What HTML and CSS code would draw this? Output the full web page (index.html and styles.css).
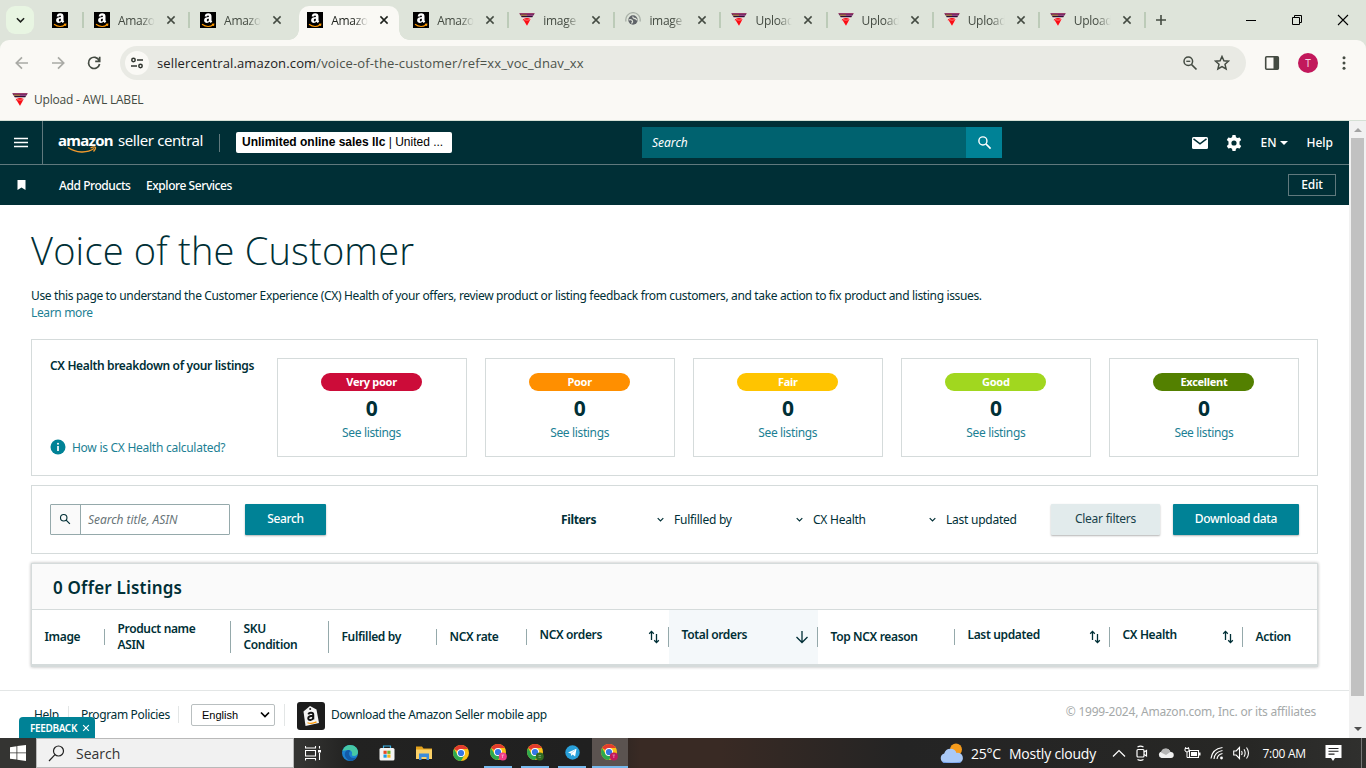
FILE: index.html
```html
<!DOCTYPE html>
<html lang="en">
  <head>
    <meta charset="UTF-8" />
    <meta name="viewport" content="width=device-width, initial-scale=1.0" />
    <title>Voice of the Customer</title>
    <link rel="stylesheet" href="styles.css">
  </head>
  <body>
    <svg class="sprite" width="0" height="0">
      <symbol id="amazon" viewBox="0 0 16 16">
        <rect width="16" height="16" fill="#000" />
        <path d="M4.700 4.400C4.900 2.300 6.300 1.300 8.200 1.300c2.200 0 3.300 1.100 3.300 3v3.600c0 .7.3 1.100.8 1.700l-1.600 1.400-1.200-1.200C8 11.600 4.100 11.300 4.100 8.300c0-2.300 2-3.100 4.800-3.200V4.600c0-.8-.3-1.200-.9-1.200-.6 0-.9.4-1 1.200z" fill="#fff" />
        <path d="M8.900 6.700c-1.500 0-2.100.4-2.100 1.500 0 .8.400 1.200.9 1.200.9 0 1.200-.8 1.200-2.700z" fill="#000" />
        <path d="M2 12.300c3.500 2.600 8 2.700 11.300.5M11.800 12.300l2-.2-.3 1.800" fill="none" stroke="#f90" stroke-width="1.100" />
      </symbol>
      <symbol id="awl" viewBox="0 0 16 16">
        <path d="M.5 1.300h15L8 14.500z" fill="#f7dcdc" />
        <path d="M.5 1.300h15l-2.200 4h-10.600z" fill="#2a1033" />
        <path d="M.5 1.800h15" stroke="#b5386f" stroke-width="1" />
        <path d="M2 3.200h6" stroke="#e0a955" stroke-width="1" />
        <path d="M8 3.200h6" stroke="#c95ab0" stroke-width="1" />
        <path d="M3.500 8.300L4.500 7q3.500-2 7 0l-.5 1.300L8 13.800 4.600 8.300z" fill="#f90d14" />
        <path d="M5 7.600q3 1.200 6 0" stroke="#ff8f8f" fill="none" stroke-width=".8" />
      </symbol>
      <symbol id="globe" viewBox="0 0 16 16">
        <path d="M1 9.500A7.200 7.200 0 1 1 15 9.500" fill="none" stroke="#a9b1a8" stroke-width="1.300" />
        <circle cx="8" cy="8" r="4.700" fill="#5f6368" />
        <path d="M4 8c1.500-1 3 0 3.500 1s-.5 2-1 2.500M8 4.500c-.5 1.500 1 2 2 2s1 1.500 2.300 1.500" fill="none" stroke="#dfe4da" stroke-width="1.300" />
      </symbol>
      <symbol id="close" viewBox="0 0 10 10">
        <path d="M1.400 1.400l7.200 7.200M8.600 1.400L1.400 8.600" fill="none" stroke="currentColor" stroke-width="1.500" />
      </symbol>
      <symbol id="chevron" viewBox="0 0 10 6">
        <path d="M1 1l4 4 4-4" fill="none" stroke="currentColor" stroke-width="1.700" />
      </symbol>
      <symbol id="lens" viewBox="0 0 16 16">
        <circle cx="6.300" cy="6.300" r="4.300" fill="none" stroke="currentColor" stroke-width="1.500" />
        <path d="M9.500 9.500l5 5" stroke="currentColor" stroke-width="1.700" />
      </symbol>
      <symbol id="sort" viewBox="0 0 12 16">
        <path d="M3.500 11V2.500M1.200 4.700l2.300-2.300L5.800 4.700M8.500 5v8.500M6.200 11.300l2.300 2.300 2.300-2.300" fill="none" stroke="currentColor" stroke-width="1.300" />
      </symbol>
      <symbol id="chrome" viewBox="0 0 16 16">
        <circle cx="8" cy="8" r="8" fill="#fbc116" />
        <path d="M8 8L1.100 4A8 8 0 0 1 14.900 4H8z" fill="#e33b2e" />
        <path d="M1.100 4A8 8 0 0 0 8 16l3.500-6L8 8 4.500 10z" fill="#2da94f" />
        <circle cx="8" cy="8" r="4" fill="#fff" />
        <circle cx="8" cy="8" r="3.100" fill="#3577e5" />
      </symbol>
    </svg>

    <header class="browser">
      <div class="tabstrip">
        <div class="tab-search"><svg width="9" height="6"><use href="#chevron" /></svg></div>
        <div class="tab pinned"><svg class="favicon"><use href="#amazon" /></svg></div>
        <div class="tab"><svg class="favicon"><use href="#amazon" /></svg><span>Amazon</span><svg class="x"><use href="#close" /></svg></div>
        <div class="tab no-sep"><svg class="favicon"><use href="#amazon" /></svg><span>Amazon</span><svg class="x"><use href="#close" /></svg></div>
        <div class="tab active"><svg class="favicon"><use href="#amazon" /></svg><span>Amazon</span><svg class="x"><use href="#close" /></svg></div>
        <div class="tab"><svg class="favicon"><use href="#amazon" /></svg><span>Amazon</span><svg class="x"><use href="#close" /></svg></div>
        <div class="tab"><svg class="favicon"><use href="#awl" /></svg><span>image</span><svg class="x"><use href="#close" /></svg></div>
        <div class="tab"><svg class="favicon"><use href="#globe" /></svg><span>image</span><svg class="x"><use href="#close" /></svg></div>
        <div class="tab"><svg class="favicon"><use href="#awl" /></svg><span>Upload</span><svg class="x"><use href="#close" /></svg></div>
        <div class="tab"><svg class="favicon"><use href="#awl" /></svg><span>Upload</span><svg class="x"><use href="#close" /></svg></div>
        <div class="tab"><svg class="favicon"><use href="#awl" /></svg><span>Upload</span><svg class="x"><use href="#close" /></svg></div>
        <div class="tab"><svg class="favicon"><use href="#awl" /></svg><span>Upload</span><svg class="x"><use href="#close" /></svg></div>
        <svg class="new-tab" width="12" height="12" viewBox="0 0 12 12"><path d="M6 1v10M1 6h10" stroke="#444b42" stroke-width="1.600" /></svg>
        <div class="window-controls">
          <svg width="12" height="12" viewBox="0 0 12 12"><path d="M1 6.500h10" stroke="#000" /></svg>
          <svg width="12" height="12" viewBox="0 0 12 12"><path d="M1.500 3.500h7v7h-7zM3.500 3.500v-2h7v7h-2" fill="none" stroke="#000" /></svg>
          <svg width="12" height="12" viewBox="0 0 12 12"><path d="M1 1l10 10M11 1L1 11" stroke="#000" stroke-width="1.100" /></svg>
        </div>
      </div>

      <div class="toolbar">
        <svg class="tool muted" viewBox="0 0 24 24"><path d="M18 12H6.500M12 6.300L6.300 12l5.700 5.700" /></svg>
        <svg class="tool muted" viewBox="0 0 24 24"><path d="M6 12h11.500M12 6.300l5.700 5.700-5.700 5.700" /></svg>
        <svg class="tool" viewBox="0 0 24 24"><path d="M17.200 9.500A5.600 5.600 0 1 0 17.600 13M17.700 5.800v4.500h-4.500" /></svg>
        <div class="omnibox">
          <span class="site-info">
            <svg width="14" height="14" viewBox="0 0 14 14"><g fill="none" stroke="#30352f" stroke-width="1.500"><circle cx="3.500" cy="4" r="1.700" /><path d="M7 4h6M1 10h6" /><circle cx="10.500" cy="10" r="1.700" /></g></svg>
          </span>
          <span class="url">sellercentral.amazon.com<i>/voice-of-the-customer/ref=xx_voc_dnav_xx</i></span>
          <svg width="16" height="16" viewBox="0 0 16 16" class="omni-icon"><use href="#lens" /><path d="M4.300 6.300h4" stroke="currentColor" stroke-width="1.300" /></svg>
          <svg width="16" height="16" viewBox="0 0 16 16" class="omni-icon"><path d="M8 1.500l1.900 4.300 4.600.4-3.500 3.100 1.100 4.600L8 11.500l-4.100 2.400L5 9.300 1.500 6.200l4.600-.4z" fill="none" stroke="currentColor" stroke-width="1.500" /></svg>
        </div>
        <svg class="side-panel" width="24" height="24" viewBox="0 0 24 24"><rect x="5.700" y="5.700" width="12.600" height="12.600" rx="1" fill="none" stroke="#444b42" stroke-width="1.600" /><path d="M13.500 5.700h4.800v12.600h-4.800z" fill="#444b42" /></svg>
        <span class="profile">T</span>
        <svg class="kebab" width="24" height="24" viewBox="0 0 24 24" fill="#444b42"><circle cx="12" cy="6.700" r="1.500" /><circle cx="12" cy="12" r="1.500" /><circle cx="12" cy="17.300" r="1.500" /></svg>
      </div>

      <div class="bookmarks">
        <svg class="favicon"><use href="#awl" /></svg>
        <span>Upload - AWL LABEL</span>
      </div>
    </header>

    <div class="viewport">
      <div class="page">
        <nav class="topnav">
          <div class="menu"><svg width="14" height="11" viewBox="0 0 14 11"><path d="M0 1.500h14M0 5.500h14M0 9.500h14" stroke="#fff" stroke-width="1.600" /></svg></div>
          <div class="logo">
            <b>amazon</b><span>seller central</span>
            <svg class="smile" width="31" height="8" viewBox="0 0 31 8"><path d="M1 1.500c8 5.500 19 6 26 1M23.500 1.800c2.500-1 4.500-1 4.800-.4s-.4 2.600-1.800 4" fill="none" stroke="#f19a2e" stroke-width="1.400" /></svg>
          </div>
          <div class="account"><b>Unlimited online sales llc</b> | United ...</div>
          <div class="nav-search">
            <span>Search</span>
            <div class="nav-search-btn"><svg width="15" height="15"><use href="#lens" /></svg></div>
          </div>
          <div class="nav-links">
            <svg width="16" height="12" viewBox="0 0 16 12"><rect width="16" height="12" rx="1.500" fill="#fff" /><path d="M1.500 1.800L8 6.800l6.500-5" fill="none" stroke="#002f36" stroke-width="1.500" /></svg>
            <svg width="16" height="16" viewBox="0 0 16 16"><path d="M6.500 0h3l.5 2.300 1.400.8 2.300-.7 1.500 2.600L13.500 6.600v2.800l1.700 1.600-1.500 2.600-2.300-.7-1.400.8-.5 2.300h-3L6 13.700l-1.400-.8-2.300.7L.8 11l1.700-1.600V6.600L.8 5l1.500-2.600 2.300.7L6 2.300zM8 5.400a2.600 2.600 0 1 0 0 5.200 2.600 2.600 0 0 0 0-5.200z" fill="#fff" fill-rule="evenodd" /></svg>
            <span class="lang">EN<svg width="8" height="4" viewBox="0 0 8 4"><path d="M0 0h8L4 4z" fill="#fff" /></svg></span>
            <span class="help">Help</span>
          </div>
        </nav>
        <nav class="subnav">
          <svg width="9" height="10" viewBox="0 0 9 10"><path d="M.5 0h8v10L4.500 7.500.5 10z" fill="#fff" /></svg>
          <span class="sub-products">Add Products</span>
          <span class="sub-services">Explore Services</span>
          <span class="edit"><span>Edit</span></span>
        </nav>

        <main>
          <h1><span>Voice of the Customer</span></h1>
          <p class="intro"><span>Use this page to understand the Customer Experience (CX) Health of your offers, review product or listing feedback from customers, and take action to fix product and listing issues.</span><br><a>Learn more</a></p>

          <section class="box health">
            <div class="health-info">
              <b>CX Health breakdown of your listings</b>
              <a><svg width="16" height="16" viewBox="0 0 16 16"><circle cx="8" cy="8" r="7.500" fill="#008296" /><path d="M8 7v5" stroke="#fff" stroke-width="1.700" /><circle cx="8" cy="4.700" r="1" fill="#fff" /></svg><span>How is CX Health calculated?</span></a>
            </div>
            <div class="cards">
              <div class="card"><span class="pill very-poor">Very poor</span><strong>0</strong><a>See listings</a></div>
              <div class="card"><span class="pill poor">Poor</span><strong>0</strong><a>See listings</a></div>
              <div class="card"><span class="pill fair">Fair</span><strong>0</strong><a>See listings</a></div>
              <div class="card"><span class="pill good">Good</span><strong>0</strong><a>See listings</a></div>
              <div class="card"><span class="pill excellent">Excellent</span><strong>0</strong><a>See listings</a></div>
            </div>
          </section>

          <section class="box filters">
            <div class="search-field">
              <div class="search-icon"><svg width="12" height="12"><use href="#lens" /></svg></div>
              <span>Search title, ASIN</span>
            </div>
            <div class="btn search-btn">Search</div>
            <b class="filters-label">Filters</b>
            <div class="filter fulfilled"><svg width="7" height="5"><use href="#chevron" /></svg><span>Fulfilled by</span></div>
            <div class="filter cx"><svg width="7" height="5"><use href="#chevron" /></svg><span>CX Health</span></div>
            <div class="filter updated"><svg width="7" height="5"><use href="#chevron" /></svg><span>Last updated</span></div>
            <div class="btn clear-btn">Clear filters</div>
            <div class="btn download-btn">Download data</div>
          </section>

          <section class="listings">
            <h2><span>0 Offer Listings</span></h2>
            <div class="thead">
              <div class="th"><span>Image</span></div>
              <div class="th double"><span>Product name<br>ASIN</span></div>
              <div class="th double"><span>SKU<br>Condition</span></div>
              <div class="th"><span>Fulfilled by</span></div>
              <div class="th"><span>NCX rate</span></div>
              <div class="th sortable"><span>NCX orders</span><svg width="12" height="16"><use href="#sort" /></svg></div>
              <div class="th sortable sorted"><span>Total orders</span><svg width="14" height="14" viewBox="0 0 14 14"><path d="M7 1v11M1.500 7L7 12.500 12.500 7" fill="none" stroke="currentColor" stroke-width="1.300" /></svg></div>
              <div class="th"><span>Top NCX reason</span></div>
              <div class="th sortable"><span>Last updated</span><svg width="12" height="16"><use href="#sort" /></svg></div>
              <div class="th sortable"><span>CX Health</span><svg width="12" height="16"><use href="#sort" /></svg></div>
              <div class="th"><span>Action</span></div>
            </div>
          </section>
        </main>

        <footer>
          <span class="foot-help">Help</span>
          <span class="foot-policies">Program Policies</span>
          <div class="foot-select">
            <div class="select">English<svg width="10" height="7"><use href="#chevron" /></svg></div>
          </div>
          <svg class="app-icon" width="28" height="28" viewBox="0 0 28 28">
            <rect width="28" height="28" rx="3" fill="#1c1c1c" />
            <path d="M6.500 9.500L13 4l6.500 3.500L22 21 8.500 24z" fill="#f4f4f4" />
            <circle cx="13.200" cy="7" r="1" fill="#222" />
            <path d="M11.300 12.400c.8-2.200 5-2.300 5 .5v4.600M16.200 13.700c-3 0-5 .7-5 2.600 0 2.500 4.400 2.200 5-.7" fill="none" stroke="#111" stroke-width="1.900" />
            <path d="M10.500 20.700c3 1 6 .7 9-.8" fill="none" stroke="#f90" stroke-width="1.200" />
          </svg>
          <span class="foot-app">Download the Amazon Seller mobile app</span>
          <span class="copyright">© 1999-2024, Amazon.com, Inc. or its affiliates</span>
        </footer>
        <div class="feedback"><span>FEEDBACK</span><svg width="8" height="8"><use href="#close" /></svg></div>
      </div>
      <div class="scrollbar">
        <svg width="8" height="4" viewBox="0 0 8 4"><path d="M0 4h8L4 0z" fill="#a3a3a3" /></svg>
        <div class="thumb"></div>
        <svg width="8" height="4" viewBox="0 0 8 4"><path d="M0 0h8L4 4z" fill="#505050" /></svg>
      </div>
    </div>

    <div class="taskbar">
      <div class="start"><svg width="16" height="16" viewBox="0 0 16 16"><path d="M0 2.200l6.500-1v6.300H0zM7.300 1.100L16 0v7.500H7.300zM0 8.300h6.500v6.300L0 13.700zM7.300 8.300H16V16l-8.700-1.200z" fill="#fff" /></svg></div>
      <div class="task-search"><svg width="17" height="17" viewBox="0 0 17 17"><circle cx="10.500" cy="6" r="5" fill="none" stroke="#222" stroke-width="1.200" /><path d="M7 9.700L1 16" stroke="#222" stroke-width="1.200" /></svg><span>Search</span></div>
      <div class="app"><svg width="16" height="16" viewBox="0 0 16 16" fill="none" stroke="#fff" stroke-width="1.100"><path d="M.5 1v2h10V1M.5 15.500v-2h10v2M.5 5.500h10v5.500H.5zM14.500 1v2.500M14.500 8v7" /><path d="M13 5h3v2.500h-3z" fill="#fff" stroke="none" /></svg></div>
      <div class="app"><svg width="16" height="16" viewBox="0 0 16 16"><circle cx="8" cy="8" r="8" fill="#1b82d1" /><path d="M.5 6C2 1.500 5.500 0 8 0c5 0 8 3.500 8 7 0 2.500-2 4-4 4s-2.500-1-2-2 0-4-4-4c-3 0-5 1-5.500 1z" fill="#46c8a5" /><path d="M6 5C3 6 2 9 3.500 12c1.500 3 4.500 4 6 3.900 2-.4 4-1.700 5-3.400-3 1-6 .5-7-2s-.5-3.500 1-4.500C8 5.300 7 5 6 5z" fill="#135ba8" /></svg></div>
      <div class="app"><svg width="16" height="16" viewBox="0 0 16 16"><path d="M4.500 4V1h7v3" fill="none" stroke="#3bb3ea" stroke-width="1.200" /><rect x=".5" y="3" width="15" height="12.500" rx="1.500" fill="#f4f4f4" /><path d="M4.500 5.700h3.200v3.200H4.500z" fill="#e74a25" /><path d="M8.300 5.700h3.200v3.200H8.300z" fill="#72b52b" /><path d="M4.500 9.500h3.200v3.200H4.500z" fill="#1d9de2" /><path d="M8.300 9.500h3.200v3.200H8.300z" fill="#f5b51d" /></svg></div>
      <div class="app"><svg width="16" height="16" viewBox="0 0 16 16"><path d="M0 1.500h6l1.500 2H16V14H0z" fill="#e4a21b" /><path d="M0 4.500h16V14H0z" fill="#fbd168" /><path d="M3 15V8.500h10V15h-2.500v-3h-5v3z" fill="#3e8cd9" /></svg></div>
      <div class="app"><svg width="16" height="16"><use href="#chrome" /></svg></div>
      <div class="app open"><svg width="17" height="17" viewBox="0 0 17 17"><use href="#chrome" width="16" height="16" /><circle cx="12.800" cy="12.500" r="4" fill="#ef3b86" /><path d="M11.500 11h2.600M12.500 11v3" stroke="#f7a8c8" stroke-width=".8" /></svg></div>
      <div class="app open"><svg width="17" height="17" viewBox="0 0 17 17"><use href="#chrome" width="16" height="16" /><circle cx="12.800" cy="12.500" r="4" fill="#316b22" /><path d="M11.500 11.500h2.600M11.500 13.300h2.600" stroke="#85aa78" stroke-width=".8" /></svg></div>
      <div class="app open"><svg width="15" height="15" viewBox="0 0 15 15"><circle cx="7.500" cy="7.500" r="7.200" fill="#29a0da" /><path d="M3 7.500l8.500-3.700-1.400 7.700-2.500-1.900-1.300 1.300-.4-2.500z" fill="#fff" /><path d="M6 8.300l4-3" stroke="#9fcbe5" stroke-width=".7" /></svg></div>
      <div class="app open current"><svg width="17" height="17" viewBox="0 0 17 17"><use href="#chrome" width="16" height="16" /><circle cx="12.800" cy="12.500" r="4" fill="#c2185b" /><path d="M11.500 11h2.600M12.800 11v3" stroke="#e58bb0" stroke-width=".8" /></svg></div>
      <div class="weather">
        <svg width="26" height="20" viewBox="0 0 26 20"><circle cx="17" cy="6.500" r="6" fill="#f59b1c" /><path d="M5.500 20a5 5 0 0 1-.3-9.600 6.500 6.500 0 0 1 12.300-.4A5 5 0 1 1 20 20z" fill="#a9c9f7" /><path d="M3 18.500q10 2 19.500 0Q21 20 19 20H6q-2 0-3-1.500z" fill="#6c9ae8" /></svg>
        <span class="temp">25°C</span><span class="sky">Mostly cloudy</span>
      </div>
      <div class="tray">
        <svg width="14" height="8" viewBox="0 0 14 8"><path d="M1 7.500l6-6 6 6" fill="none" stroke="#fff" stroke-width="1.200" /></svg>
        <svg width="14" height="16" viewBox="0 0 14 16" fill="none" stroke="#fff" stroke-width="1.200"><rect x="2" y="4.500" width="7" height="7.500" rx="1" /><path d="M9 7l2.500-1.500v5.500L9 9.500M2.500 2q3-1.600 6 0M2.500 14.500q3 1.600 6 0" /></svg>
        <svg width="16" height="10" viewBox="0 0 16 10"><path d="M3.500 10A3.200 3.200 0 0 1 3.500 3.700 4.800 4.800 0 0 1 12.500 4 3 3 0 0 1 13 10z" fill="#f0f0f0" /><path d="M3 4.500A4.800 4.800 0 0 1 12.300 4L8 7z" fill="#b5b5b5" /></svg>
        <svg width="17" height="12" viewBox="0 0 17 12"><path d="M5.500 3.500h9v7h-9z" fill="none" stroke="#fff" stroke-width="1.100" /><path d="M7 5h6v4H7zM15 5.500h1.500v3H15z" fill="#fff" /><path d="M1 1.500h4v2.500q-2 2-4 0zM3 5v5.500h2M1.700 0v1.500M4.300 0v1.500" fill="none" stroke="#fff" /></svg>
        <svg width="14" height="14" viewBox="0 0 14 14" fill="none" stroke="#fff" stroke-width="1.100"><path d="M1 12.500Q2 3 12.500 1.500M4 13Q4.500 6 12.500 4.500M7 13Q7.500 8.500 12.500 7.500" /><circle cx="11.500" cy="12" r="1.400" fill="#fff" stroke="none" /></svg>
        <svg width="17" height="14" viewBox="0 0 17 14" fill="none" stroke="#fff" stroke-width="1.100"><path d="M.7 5h2.500L6.500 1.500v11L3.200 9H.7zM8.500 5q1.200 2 0 4M11 3.300q2.300 3.700 0 7.400M13.500 1.500q4 5.500 0 11" /></svg>
        <span class="clock">7:00 AM</span>
        <svg width="17" height="16" viewBox="0 0 17 16"><path d="M.5 0h16v13H10l-2 3-2-3H.5z" fill="#fff" /><path d="M3.500 3.500h10M3.500 6.300h10M3.500 9.100h6" stroke="#222" stroke-width="1.100" /></svg>
      </div>
    </div>
  </body>
</html>
```
FILE: styles.css
```css
* {
  box-sizing: border-box;
}

body {
  margin: 0;
  width: 1366px;
  height: 768px;
  overflow: hidden;
  display: flex;
  flex-direction: column;
  font-family: "Noto Sans", "Open Sans", sans-serif;
  font-size: 12px;
  color: #002f36;
}

svg {
  display: block;
  flex: none;
}

span,
b,
a {
  white-space: nowrap;
}

.sprite {
  position: absolute;
}

.favicon {
  width: 16px;
  height: 16px;
}

/* browser window */
.browser {
  height: 121px;
  background: #dee4da;
  border-bottom: 1px solid #d5e0d5;
  flex: none;
}

.tabstrip {
  height: 40px;
  display: flex;
  align-items: center;
  padding-left: 6px;
}

.tab-search {
  width: 28px;
  height: 28px;
  border-radius: 9px;
  background: #e8f5e2;
  display: flex;
  align-items: center;
  justify-content: center;
  color: #1d211c;
}

.tab {
  width: 106.100px;
  height: 16px;
  display: flex;
  align-items: center;
  padding-left: 10px;
  border-right: 2px solid #bccbb8;
  color: #444b42;
}

.tab span {
  width: 38px;
  margin-left: 8px;
  overflow: hidden;
  font-family: "Open Sans", sans-serif;
  letter-spacing: -0.3px;
  mask-image: linear-gradient(90deg, #000 60%, transparent 97%);
}

.tab .x {
  width: 10px;
  height: 10px;
  margin-left: 10px;
}

.tab.pinned {
  width: 50px;
  padding-left: 18px;
}

.tab.no-sep {
  border-color: transparent;
}

.tab.active {
  position: relative;
  height: 34px;
  width: 100px;
  margin: 6px 4px 0 3px;
  padding: 0 0 6px 8px;
  border: 0;
  border-radius: 10px 10px 0 0;
  background: #faf9f5;
  color: #1d211c;
}

/* curved feet of the active tab */
.tab.active::before,
.tab.active::after {
  content: "";
  position: absolute;
  bottom: 0;
  width: 10px;
  height: 10px;
}

.tab.active::before {
  left: -10px;
  background: radial-gradient(circle at 0 0, transparent 9.500px, #faf9f5 10px);
}

.tab.active::after {
  right: -10px;
  background: radial-gradient(circle at 100% 0, transparent 9.500px, #faf9f5 10px);
}

.new-tab {
  margin-left: 9px;
}

.window-controls {
  margin-left: auto;
  display: flex;
  gap: 34px;
  padding-right: 17px;
}

.toolbar {
  height: 46px;
  display: flex;
  align-items: center;
  padding: 0 10px;
  background: #faf9f5;
  border-radius: 9px 9px 0 0;
}

.tool {
  width: 24px;
  height: 24px;
  margin-right: 12px;
  fill: none;
  stroke: #444b42;
  stroke-width: 1.700;
}

.tool.muted {
  stroke: #a9aaa5;
}

.omnibox {
  flex: 1;
  height: 34px;
  margin: 0 14px 0 2px;
  padding: 0 16px 0 5px;
  border-radius: 17px;
  background: #e9eae4;
  display: flex;
  align-items: center;
}

.site-info {
  width: 24px;
  height: 24px;
  border-radius: 50%;
  background: #faf9f5;
  display: flex;
  align-items: center;
  justify-content: center;
}

.url {
  flex: 1;
  margin-left: 8px;
  font-family: "Open Sans", sans-serif;
  font-size: 13px;
  letter-spacing: 0.14px;
  color: #1d211c;
}

.url i {
  font-style: normal;
  color: #4c524b;
}

.omni-icon {
  margin-left: 16px;
  color: #444b42;
}

.profile {
  width: 20px;
  height: 20px;
  margin: 0 14px;
  border-radius: 50%;
  background: #c2185b;
  color: #f6d5e2;
  font-size: 10px;
  line-height: 20px;
  text-align: center;
}

.bookmarks {
  height: 34px;
  display: flex;
  align-items: center;
  gap: 6px;
  padding: 0 0 7px 12px;
  background: #faf9f5;
  font-family: "Open Sans", sans-serif;
  letter-spacing: -0.2px;
  color: #444b42;
}

/* seller central */
.viewport {
  height: 617px;
  display: flex;
}

.page {
  width: 1349px;
  background: #fff;
  position: relative;
  letter-spacing: -0.35px;
}

.topnav {
  height: 44px;
  display: flex;
  align-items: center;
  background: #002f36;
  border-bottom: 1px solid #60797d;
  color: #fff;
}

.menu {
  width: 43px;
  height: 43px;
  display: flex;
  align-items: center;
  padding-left: 14px;
  border-right: 1px solid #60797d;
}

.logo {
  position: relative;
  width: 177px;
  height: 18px;
  padding-left: 15px;
  border-right: 1px solid #60797d;
  font-size: 15px;
  line-height: 13px;
  white-space: nowrap;
}

.logo b,
.logo span {
  display: inline-block;
}

.logo b {
  width: 60px;
  letter-spacing: -0.7px;
}

.logo span {
  letter-spacing: -0.4px;
}

.smile {
  position: absolute;
  left: 24px;
  top: 12px;
}

.account {
  width: 216px;
  height: 21px;
  margin-left: 16px;
  padding-left: 6px;
  border-radius: 2px;
  background: #fff;
  color: #000;
  font: 12px/21px "Liberation Sans", Arial, sans-serif;
  letter-spacing: 0;
  white-space: nowrap;
}

.nav-search {
  width: 360px;
  height: 31px;
  margin-left: 190px;
  display: flex;
  align-items: center;
  justify-content: space-between;
  padding-left: 10px;
  background: #00626f;
  font-style: italic;
  letter-spacing: 0;
}

.nav-search-btn {
  width: 36px;
  height: 31px;
  display: flex;
  align-items: center;
  justify-content: center;
  background: #008296;
}

.nav-links {
  margin-left: auto;
  padding-right: 16px;
  display: flex;
  align-items: center;
  gap: 18px;
  font-weight: 500;
  letter-spacing: 0;
}

.lang {
  display: flex;
  align-items: center;
  gap: 4px;
}

.subnav {
  height: 40px;
  display: flex;
  align-items: center;
  padding: 0 13px 0 17px;
  background: #002f36;
  color: #fff;
  font-weight: 500;
  letter-spacing: -0.43px;
}

.sub-products {
  margin-left: 33px;
  width: 87px;
}

.edit {
  width: 48px;
  height: 22px;
  margin-left: auto;
  border: 1px solid #60797d;
  letter-spacing: -0.1px;
  line-height: 20px;
  text-align: center;
}

main {
  padding: 0 31px;
}

a {
  color: #1c7f94;
}

h1 {
  height: 49px;
  margin: 21px 0 0;
  font: 300 38px/49px "Open Sans", sans-serif;
  letter-spacing: 0.2px;
}

.intro {
  height: 34px;
  margin: 12px 0 18px;
  line-height: 17px;
}

.box {
  border: 1px solid #d5dbdb;
}

.health {
  height: 137px;
  display: flex;
  padding: 18px;
}

.health-info {
  width: 226.500px;
  padding-bottom: 2px;
  display: flex;
  flex-direction: column;
  justify-content: space-between;
  font-weight: 600;
  line-height: 15px;
}

.health-info b {
  font-weight: 600;
}

.health-info a {
  display: flex;
  align-items: center;
  gap: 6px;
  font-weight: 400;
  letter-spacing: -0.27px;
}

.cards {
  flex: 1;
  display: grid;
  grid-template-columns: repeat(5, 1fr);
  gap: 18px;
}

.card {
  height: 99px;
  display: flex;
  flex-direction: column;
  align-items: center;
  padding-top: 14px;
  border: 1px solid #d5dbdb;
}

.card strong {
  font-size: 21px;
  line-height: 34px;
}

.card a {
  line-height: 15px;
}

.pill {
  width: 101px;
  height: 18px;
  border-radius: 9px;
  color: #fff;
  font-size: 11px;
  font-weight: 700;
  letter-spacing: -0.3px;
  line-height: 18px;
  text-align: center;
}

.very-poor {
  background: #cc0c39;
}

.poor {
  background: #ff8f00;
}

.fair {
  background: #ffc400;
}

.good {
  background: #a1d71f;
}

.excellent {
  background: #538000;
}

.filters {
  height: 69px;
  margin-top: 9px;
  display: flex;
  align-items: center;
  padding: 0 18px;
}

.search-field {
  width: 180px;
  height: 31px;
  display: flex;
  align-items: center;
  border: 1px solid #95a9ab;
  border-radius: 1px;
  color: #687477;
  font-style: italic;
  letter-spacing: -0.05px;
}

.search-field span {
  margin-bottom: 1px;
}

.search-icon {
  width: 30px;
  height: 29px;
  margin-right: 7px;
  display: flex;
  align-items: center;
  justify-content: center;
  padding: 0 1px 2px 0;
  background: #fafafa;
  border-right: 1px solid #95a9ab;
  color: #002f36;
}

.btn {
  height: 31px;
  border-radius: 1px;
  background: #008296;
  box-shadow: 0 1px 2px rgba(0, 0, 0, 0.3);
  color: #fff;
  font-weight: 500;
  line-height: 30px;
  text-align: center;
  white-space: nowrap;
}

.search-btn {
  width: 81px;
  margin-left: 15px;
}

.filters-label {
  width: 96px;
  margin: 0 0 1px 235px;
}

.filter {
  display: flex;
  align-items: center;
  gap: 10px;
  margin-bottom: 1px;
  letter-spacing: -0.25px;
}

.fulfilled {
  width: 139px;
}

.cx {
  width: 133px;
}

.updated {
  flex: 1;
}

.clear-btn {
  width: 109px;
  background: #e2ebec;
  color: #17414a;
  font-weight: 400;
  letter-spacing: -0.25px;
}

.download-btn {
  width: 126px;
  margin-left: 13px;
}

.listings {
  height: 104px;
  margin-top: 9px;
  border: 1px solid #d5dbdb;
  border-bottom-width: 3px;
  box-shadow: 0 0 3px rgba(0, 0, 0, 0.3);
}

h2 {
  height: 46px;
  margin: 0;
  padding-left: 21px;
  border-bottom: 1px solid #d5dbdb;
  background: #fafafa;
  font-size: 17px;
  font-weight: 600;
  letter-spacing: 0.2px;
  line-height: 48px;
}

.thead {
  height: 54px;
  display: grid;
  grid-template-columns: 73px 126px 98px 108px 90px 142px 149px 137px 155px 133px 1fr;
  font-weight: 600;
  line-height: 16px;
}

.th {
  display: flex;
  align-items: center;
  padding-left: 12.500px;
}

/* column divider */
.th::after {
  content: "";
  width: 1px;
  height: 16px;
  margin-left: auto;
  background: #95a9ab;
}

.th:last-child::after {
  display: none;
}

.th.double::after {
  height: 32px;
}

.sortable::after {
  height: 20px;
}

.sortable span {
  margin-bottom: 4px;
}

.sortable svg {
  margin-left: auto;
}

.sortable::after {
  margin-left: 8px;
}

.sorted {
  background: #f4f8fa;
}

footer {
  height: 48px;
  margin-top: 23px;
  display: flex;
  align-items: center;
  padding: 0 33px 0 34px;
  border-top: 1px solid #e3e6e6;
}

.foot-help {
  width: 35px;
  border-right: 1px solid #e3e6e6;
}

.foot-policies {
  width: 110px;
  padding-left: 12px;
  border-right: 1px solid #e3e6e6;
}

.foot-select {
  width: 106px;
  padding-left: 12px;
  border-right: 1px solid #e3e6e6;
}

.select {
  width: 84px;
  height: 22px;
  display: flex;
  align-items: center;
  justify-content: space-between;
  padding: 0 4px 0 10px;
  border: 1px solid #b9bfc0;
  border-radius: 2px;
  font: 11px "Liberation Sans", Arial, sans-serif;
  letter-spacing: 0;
  color: #000;
}

.app-icon {
  margin: 3px 6px 0 12px;
}

.copyright {
  margin: 0 0 6px auto;
  letter-spacing: -0.23px;
  color: #a5a9a9;
}

.feedback {
  position: absolute;
  left: 19px;
  bottom: 0;
  width: 76px;
  height: 21px;
  display: flex;
  align-items: center;
  gap: 5px;
  padding-left: 11px;
  border-radius: 4px 4px 0 0;
  background: #008296;
  color: #fff;
  font-size: 10px;
  font-weight: 600;
}

.scrollbar {
  width: 17px;
  background: #f1f1f1;
  display: flex;
  flex-direction: column;
  align-items: center;
  padding: 7px 0;
}

.thumb {
  width: 13px;
  height: 558px;
  margin: 6px 0 auto;
  background: #c1c1c1;
}

/* windows taskbar */
.taskbar {
  height: 30px;
  display: flex;
  background: linear-gradient(90deg, #343432 0, #343432 300px, #222221 350px, #202020 590px, #392a24 640px, #392a24 720px, #242424 900px, #272725 1250px, #30302e 1366px);
  color: #fff;
  font-family: "Open Sans", sans-serif;
}

.start {
  flex: none;
  width: 36px;
  padding: 7px 0 0 10px;
}

.task-search {
  flex: none;
  width: 258px;
  display: flex;
  align-items: center;
  gap: 11px;
  padding-left: 11px;
  background: #f1f1f1;
  border: 1px solid #b9b9b9;
  color: #333;
  font-size: 14px;
}

.app {
  flex: none;
  width: 37.200px;
  display: flex;
  align-items: center;
  justify-content: center;
  padding: 0 0 1px;
}

.app.open {
  box-shadow: inset 0 -2px #76b9ed;
  width: 28px;
  margin: 0 4.500px;
}

.app.open.current {
  width: 36px;
  margin: 0 0 0 1px;
  background: #5b5350;
}

.weather {
  flex: none;
  margin-left: 311px;
  display: flex;
  align-items: center;
  font-size: 14px;
  letter-spacing: -0.2px;
}

.temp {
  width: 38px;
  margin-left: 6px;
}

.sky {
  width: 87px;
}

.tray {
  flex: 1;
  display: flex;
  align-items: center;
  justify-content: space-between;
  margin-right: 4px;
  padding: 0 19px 0 16px;
  border-right: 1px solid #777;
}

.clock {
  margin: 0 10px 0 3px;
  letter-spacing: -0.3px;
}
```
